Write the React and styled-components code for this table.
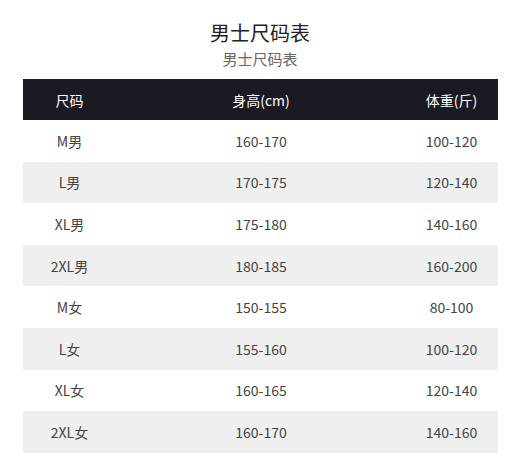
import styled, { createGlobalStyle } from 'styled-components';

const GlobalStyle = createGlobalStyle`
    html, body {
        margin: 0;
        padding: 0;
        background: #FFFFFF;
    }
    body {
        font-family: "Noto Sans CJK SC", "Noto Sans", sans-serif;
        color: #333333;
    }
`;

const rows = [
    ['M男', '160-170', '100-120'],
    ['L男', '170-175', '120-140'],
    ['XL男', '175-180', '140-160'],
    ['2XL男', '180-185', '160-200'],
    ['M女', '150-155', '80-100'],
    ['L女', '155-160', '100-120'],
    ['XL女', '160-165', '120-140'],
    ['2XL女', '160-170', '140-160'],
];

export default function App() {
    return (
        <>
        <GlobalStyle />
        <Page>
            <Title>男士尺码表</Title>
            <SubTitle>男士尺码表</SubTitle>
            <Table>
                <HeaderRow>
                    <SizeCell>尺码</SizeCell>
                    <HeightCell>身高(cm)</HeightCell>
                    <WeightCell>体重(斤)</WeightCell>
                </HeaderRow>
                {rows.map((row, i) => (
                    <Row key={row[0]} striped={i % 2 === 1}>
                        <SizeCell>{row[0]}</SizeCell>
                        <HeightCell>{row[1]}</HeightCell>
                        <WeightCell>{row[2]}</WeightCell>
                    </Row>
                ))}
            </Table>
        </Page>
        </>
    );
}

const Page = styled.div`
    width: 520px;
    height: 475px;
    display: flex;
    flex-direction: column;
    align-items: center;
    padding-top: 20px;
    box-sizing: border-box;
`;

const Title = styled.div`
    font-size: 20px;
    line-height: 26px;
    color: #222222;
`;

const SubTitle = styled.div`
    font-size: 15px;
    line-height: 20px;
    margin-top: 3px;
    color: #666666;
`;

const Table = styled.div`
    width: 475px;
    margin-top: 10px;
    display: flex;
    flex-direction: column;
`;

const Row = styled.div`
    height: 41.6px;
    display: flex;
    align-items: center;
    font-size: 14px;
    color: #444444;
    background: ${props => props.striped ? '#EFEFEF' : '#FFFFFF'};
`;

const HeaderRow = styled(Row)`
    height: 41px;
    background: #1B1A22;
    color: #FFFFFF;
`;

const SizeCell = styled.div`
    width: 94px;
    text-align: center;
`;

const HeightCell = styled.div`
    flex: 1;
    text-align: center;
`;

const WeightCell = styled.div`
    width: 92px;
    text-align: center;
`;
